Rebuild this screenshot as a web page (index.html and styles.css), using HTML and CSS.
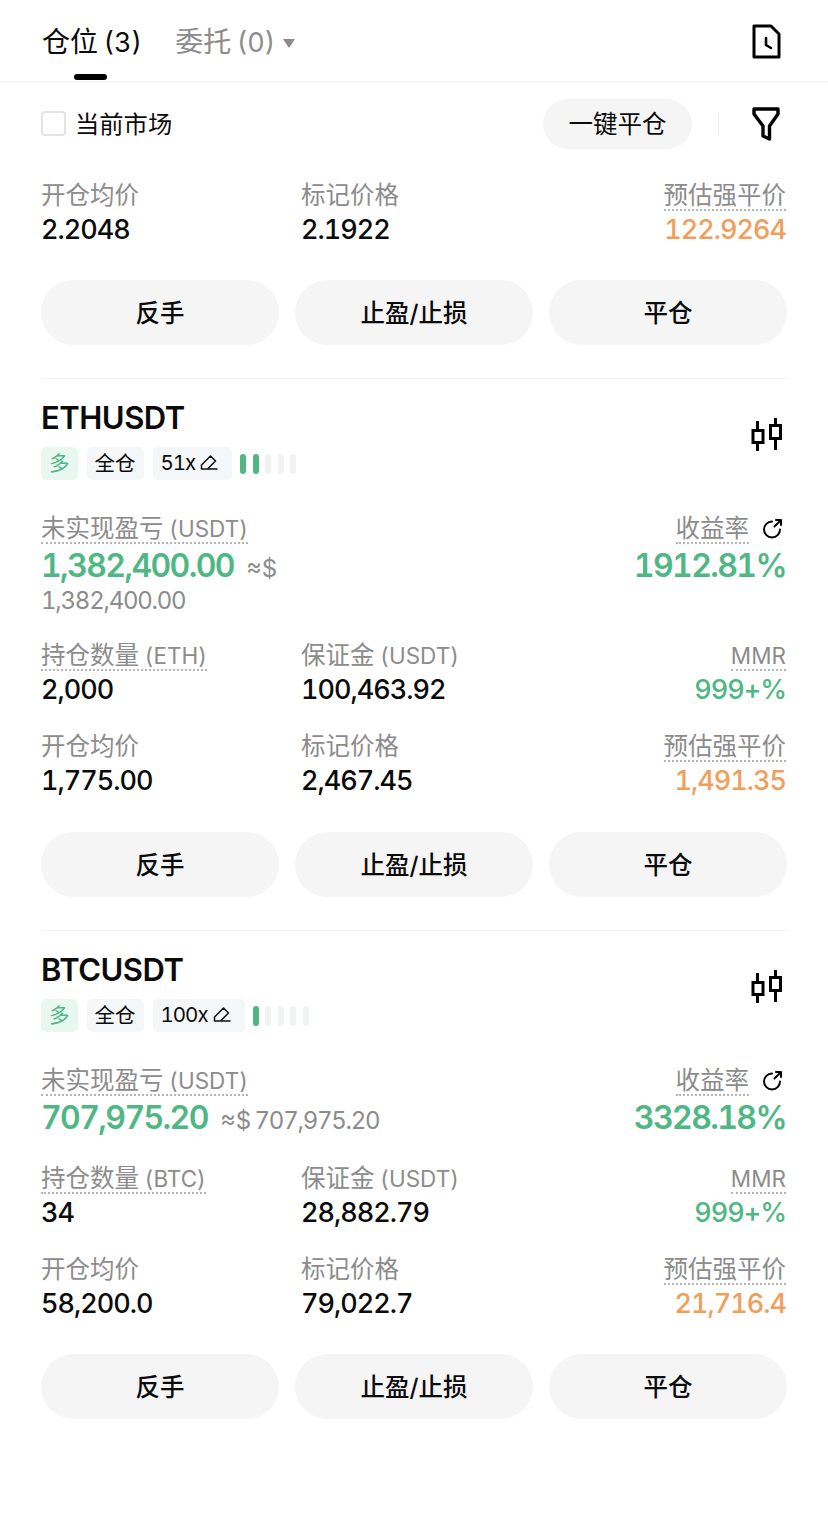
FILE: index.html
```html
<!DOCTYPE html>
<html lang="zh-CN">
<head>
  <meta charset="UTF-8">
  <meta name="viewport" content="width=device-width, initial-scale=1.0">
  <title>仓位</title>
  <link rel="stylesheet" href="styles.css">
</head>
<body>
  <!-- Tabs -->
  <header class="tabs">
    <div class="tab active">仓位 <span class="count">(3)</span></div>
    <div class="tab">委托 <span class="count">(0)</span><span class="caret"></span></div>
    <svg class="history-icon" width="30" height="36" viewBox="0 0 30 36" fill="none" stroke="#000" stroke-width="3" stroke-linejoin="round" stroke-linecap="round">
      <path d="M2 2H19L27 10V33H2Z"/>
      <path d="M14 14V21L19 24" stroke-width="2.6"/>
    </svg>
  </header>

  <!-- Filters -->
  <div class="toolbar">
    <label class="market-check"><span class="checkbox"></span>当前市场</label>
    <button class="close-all">一键平仓</button>
    <span class="toolbar-sep"></span>
    <svg class="filter-icon" width="30" height="36" viewBox="0 0 30 36" fill="none" stroke="#000" stroke-width="3.4" stroke-linejoin="round">
      <path d="M3 3H27V8L18.5 20V33L12 30V20L3 8Z"/>
    </svg>
  </div>

  <!-- Cut off position -->
  <section class="position first">
    <div class="stats">
      <div class="stat"><div class="label">开仓均价</div><div class="value">2.2048</div></div>
      <div class="stat"><div class="label">标记价格</div><div class="value">2.1922</div></div>
      <div class="stat right"><div class="label"><span class="dotted">预估强平价</span></div><div class="value orange">122.9264</div></div>
    </div>
    <div class="actions"><button>反手</button><button>止盈/止损</button><button>平仓</button></div>
  </section>

  <section class="position">
    <div class="title-row">
      <h2>ETHUSDT</h2>
      <svg class="candle-icon" width="32" height="36" viewBox="0 0 32 36" fill="none" stroke="#000" stroke-width="3">
        <path d="M6.5 5V35M24.5 2V34"/>
        <rect x="2" y="14.5" width="10" height="12" fill="#fff"/>
        <rect x="19.5" y="9.5" width="10" height="13" fill="#fff"/>
      </svg>
    </div>
    <div class="tags">
      <span class="tag long">多</span>
      <span class="tag">全仓</span>
      <span class="tag leverage">51x
        <svg width="18" height="18" viewBox="0 0 18 18" fill="none" stroke="#111" stroke-width="1.5" stroke-linejoin="round" stroke-linecap="round"><path d="M1.5 15V11L10.5 2L15.5 7L7.5 15H1.5M7.5 15H17"/></svg>
      </span>
      <span class="risk"><i class="on"></i><i class="on"></i><i></i><i></i><i></i></span>
    </div>
    <div class="pnl wrapped">
      <div class="pnl-left">
        <div class="label"><span class="dotted">未实现盈亏 <span class="unit">(USDT)</span></span></div>
        <div class="pnl-text"><span class="pnl-value">1,382,400.00</span> <span class="approx">≈$ <span class="approx-num">1,382,400.00</span></span></div>
      </div>
      <div class="pnl-right">
        <div class="label"><span class="dotted">收益率</span>
          <svg class="share-icon" width="22" height="22" viewBox="0 0 22 22" fill="none" stroke="#000" stroke-width="2" stroke-linecap="round" stroke-linejoin="round"><path d="M11 3.5A8 8 0 1 0 19 11.5M13.5 8.5L20 2M15 2H20V7"/></svg>
        </div>
        <div class="pnl-value">1912.81%</div>
      </div>
    </div>
    <div class="stats">
      <div class="stat"><div class="label"><span class="dotted">持仓数量 <span class="unit">(ETH)</span></span></div><div class="value">2,000</div></div>
      <div class="stat"><div class="label">保证金 <span class="unit">(USDT)</span></div><div class="value">100,463.92</div></div>
      <div class="stat right"><div class="label"><span class="dotted unit">MMR</span></div><div class="value green">999+%</div></div>
      <div class="stat"><div class="label">开仓均价</div><div class="value">1,775.00</div></div>
      <div class="stat"><div class="label">标记价格</div><div class="value">2,467.45</div></div>
      <div class="stat right"><div class="label"><span class="dotted">预估强平价</span></div><div class="value orange">1,491.35</div></div>
    </div>
    <div class="actions"><button>反手</button><button>止盈/止损</button><button>平仓</button></div>
  </section>

  <section class="position">
    <div class="title-row">
      <h2>BTCUSDT</h2>
      <svg class="candle-icon" width="32" height="36" viewBox="0 0 32 36" fill="none" stroke="#000" stroke-width="3">
        <path d="M6.5 5V35M24.5 2V34"/>
        <rect x="2" y="14.5" width="10" height="12" fill="#fff"/>
        <rect x="19.5" y="9.5" width="10" height="13" fill="#fff"/>
      </svg>
    </div>
    <div class="tags">
      <span class="tag long">多</span>
      <span class="tag">全仓</span>
      <span class="tag leverage">100x
        <svg width="18" height="18" viewBox="0 0 18 18" fill="none" stroke="#111" stroke-width="1.5" stroke-linejoin="round" stroke-linecap="round"><path d="M1.5 15V11L10.5 2L15.5 7L7.5 15H1.5M7.5 15H17"/></svg>
      </span>
      <span class="risk"><i class="on"></i><i></i><i></i><i></i><i></i></span>
    </div>
    <div class="pnl">
      <div class="pnl-left">
        <div class="label"><span class="dotted">未实现盈亏 <span class="unit">(USDT)</span></span></div>
        <div class="pnl-text"><span class="pnl-value">707,975.20</span> <span class="approx">≈$ <span class="approx-num">707,975.20</span></span></div>
      </div>
      <div class="pnl-right">
        <div class="label"><span class="dotted">收益率</span>
          <svg class="share-icon" width="22" height="22" viewBox="0 0 22 22" fill="none" stroke="#000" stroke-width="2" stroke-linecap="round" stroke-linejoin="round"><path d="M11 3.5A8 8 0 1 0 19 11.5M13.5 8.5L20 2M15 2H20V7"/></svg>
        </div>
        <div class="pnl-value">3328.18%</div>
      </div>
    </div>
    <div class="stats">
      <div class="stat"><div class="label"><span class="dotted">持仓数量 <span class="unit">(BTC)</span></span></div><div class="value">34</div></div>
      <div class="stat"><div class="label">保证金 <span class="unit">(USDT)</span></div><div class="value">28,882.79</div></div>
      <div class="stat right"><div class="label"><span class="dotted unit">MMR</span></div><div class="value green">999+%</div></div>
      <div class="stat"><div class="label">开仓均价</div><div class="value">58,200.0</div></div>
      <div class="stat"><div class="label">标记价格</div><div class="value">79,022.7</div></div>
      <div class="stat right"><div class="label"><span class="dotted">预估强平价</span></div><div class="value orange">21,716.4</div></div>
    </div>
    <div class="actions"><button>反手</button><button>止盈/止损</button><button>平仓</button></div>
  </section>
</body>
</html>
```

FILE: styles.css
```css
* {
  box-sizing: border-box;
}
body {
  margin: 0;
  background: #fff;
  color: #0b0b0b;
  font-family: Inter, "Noto Sans CJK SC", sans-serif;
  font-feature-settings: "tnum";
}
button {
  font-family: inherit;
  border: none;
  color: #0b0b0b;
  background: #f5f5f5;
}

/* tabs */
.tabs {
  height: 83px;
  padding: 0 46px 0 42px;
  display: flex;
  align-items: flex-start;
  gap: 33px;
  border-bottom: 2px solid #f5f5f5;
}
.tab {
  position: relative;
  height: 81px;
  line-height: 84px;
  font-size: 28px;
  word-spacing: -2px;
  color: #8c8c8c;
  white-space: nowrap;
}
.tab.active {
  color: #0b0b0b;
}
.tab.active::after {
  content: "";
  position: absolute;
  left: 32px;
  bottom: 1px;
  width: 33px;
  height: 6px;
  border-radius: 3px;
  background: #000;
}
.count {
  font-size: 27px;
}
.caret {
  display: inline-block;
  margin-left: 8px;
  vertical-align: 4px;
  border-left: 6px solid transparent;
  border-right: 6px solid transparent;
  border-top: 9px solid #8c8c8c;
}
.history-icon {
  margin: 24px 0 0 auto;
}

/* toolbar */
.toolbar {
  display: flex;
  align-items: center;
  height: 68px;
  margin-top: -1px;
  padding: 15px 47px 0 41px;
}
.market-check {
  display: flex;
  align-items: center;
  gap: 9px;
  height: 34px;
  padding-bottom: 3px;
  font-size: 24.3px;
  margin-right: auto;
}
.checkbox {
  width: 25px;
  height: 25px;
  margin-top: 3px;
  border: 2px solid #e4e4e4;
  border-radius: 4px;
}
.close-all {
  width: 149px;
  height: 50px;
  padding-bottom: 3px;
  border-radius: 25px;
  font-size: 24.5px;
}
.toolbar-sep {
  width: 1px;
  height: 24px;
  margin: 0 32px 0 26px;
  background: #eee;
}

/* positions */
.position {
  margin: 0 41px;
  padding: 19px 0 33px;
  border-bottom: 1px solid #f3f3f3;
}
.position:last-child {
  border-bottom: none;
}
.position.first {
  padding: 29px 0 33px;
}
.title-row {
  display: flex;
  justify-content: space-between;
  align-items: flex-start;
  height: 40px;
}
.title-row h2 {
  margin: 0;
  font-size: 31px;
  line-height: 40px;
  font-weight: 600;
  letter-spacing: -0.5px;
}
.candle-icon {
  margin: 18px 4px 0 0;
  flex: none;
}
.tags {
  display: flex;
  align-items: center;
  gap: 9px;
  margin-top: 9px;
  height: 33px;
}
.tag {
  display: flex;
  align-items: center;
  gap: 5px;
  height: 33px;
  padding: 0 8px 3px;
  border-radius: 5px;
  background: #f5f6f7;
  font-size: 20.5px;
  white-space: nowrap;
}
.tag svg {
  margin-top: 2px;
}
.tag.long {
  background: #e9f7f1;
  color: #4fb784;
}
.tag.leverage {
  letter-spacing: -1px;
  padding-right: 14px;
}
.risk {
  display: flex;
  gap: 6.5px;
  margin-left: -1px;
}
.risk i {
  width: 6px;
  height: 20px;
  border-radius: 3px;
  background: #f1f2f3;
}
.risk i.on {
  background: #4fb784;
}
.label {
  height: 34px;
  line-height: 32px;
  font-size: 24.5px;
  color: #8c8c8c;
  white-space: nowrap;
}
.unit {
  font-size: 22.5px;
  margin-left: -1px;
}
.dotted {
  display: inline-block;
  line-height: 27px;
  border-bottom: 2px dotted #b5b5b5;
}
.value {
  height: 34px;
  line-height: 34px;
  font-size: 27px;
  font-weight: 500;
  letter-spacing: -1px;
}
.green, .pnl-value {
  color: #4fb784;
}
.orange {
  color: #ef9f5a;
}
.pnl {
  display: flex;
  justify-content: space-between;
  margin: 32px 0 24px;
}
.pnl.wrapped {
  margin-bottom: 21px;
}
.pnl-left {
  width: 360px;
}
.pnl-text {
  line-height: 30px;
  margin-top: 2px;
}
.pnl-value {
  font-size: 32px;
  line-height: 36px;
  font-weight: 600;
  letter-spacing: -1.6px;
}
.approx {
  margin-left: 8px;
  font-size: 24px;
  color: #8c8c8c;
  word-spacing: -3px;
}
.approx-num {
  letter-spacing: -1.25px;
}
.pnl-right {
  text-align: right;
  padding-right: 1px;
}
.pnl-right .label {
  display: flex;
  align-items: center;
  justify-content: flex-end;
  gap: 12px;
}
.pnl-right .pnl-value {
  margin-top: 2px;
}
.share-icon {
  margin-right: 3px;
}
.stats {
  display: grid;
  grid-template-columns: 260px 1fr auto;
  row-gap: 23px;
}
.stat.right {
  text-align: right;
  padding-right: 1px;
}
.actions {
  display: grid;
  grid-template-columns: 238px 238px 238px;
  gap: 16px;
  margin-top: 34px;
}
.first .actions, .position:last-child .actions {
  margin-top: 33px;
}
.actions button {
  height: 65px;
  padding-bottom: 3px;
  border-radius: 33px;
  font-size: 24.5px;
  font-weight: 500;
}
```
